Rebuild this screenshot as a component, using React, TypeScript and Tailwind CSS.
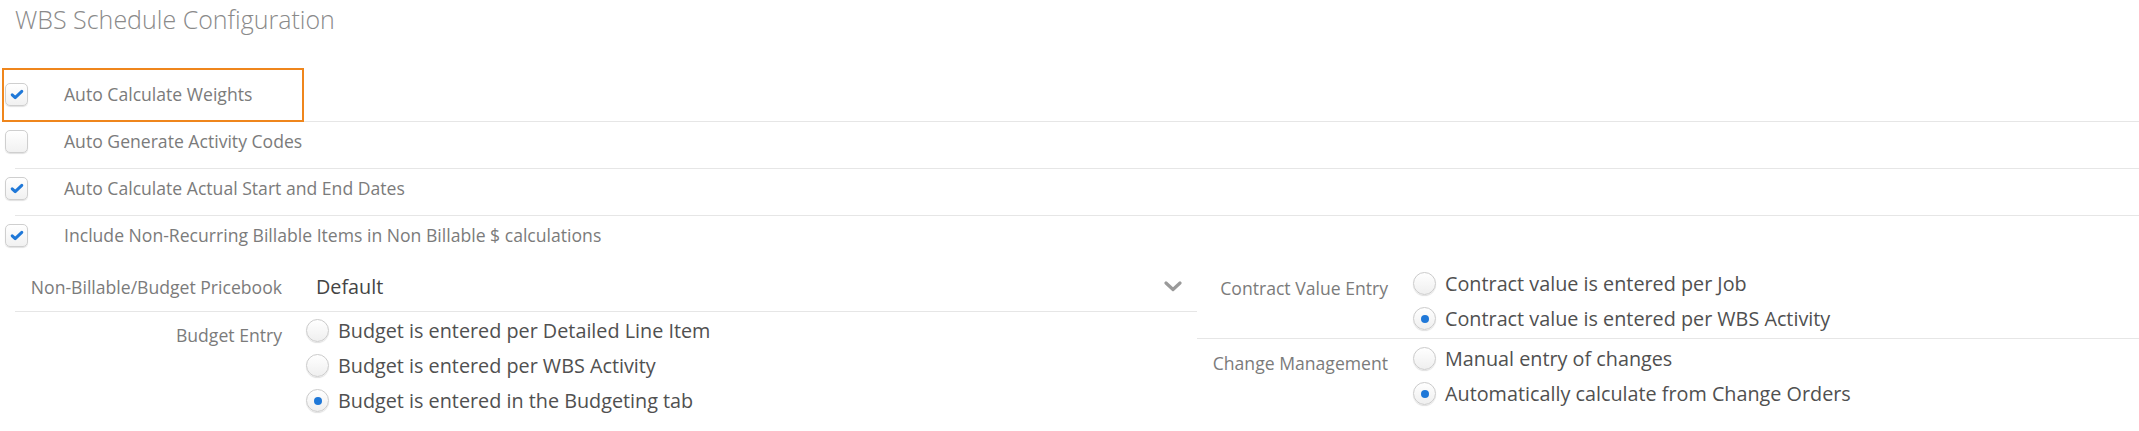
import React from "react";

interface CheckRowProps {
  label: string;
  checked: boolean;
  last?: boolean;
}

interface RadioGroupProps {
  options: { label: string; checked: boolean }[];
}

const Checkbox: React.FC<{ checked: boolean }> = ({ checked }) => (
  <span className="flex h-[23px] w-[23px] shrink-0 items-center justify-center rounded-[5px] border border-[#cfcfcf] bg-linear-to-b from-white to-[#f1f1f1] shadow-[0_1px_1px_rgba(0,0,0,0.12)]">
    {checked && (
      <svg width="14" height="11" viewBox="0 0 14 11" fill="none">
        <path
          d="M2.2 5.8 5.2 8.6 11.8 2.4"
          stroke="#1f78d8"
          strokeWidth="3"
          strokeLinecap="round"
          strokeLinejoin="round"
        />
      </svg>
    )}
  </span>
);

const Radio: React.FC<{ checked: boolean }> = ({ checked }) => (
  <span className="flex h-[23px] w-[23px] shrink-0 items-center justify-center rounded-full border border-[#cbcbcb] bg-linear-to-b from-white to-[#efefef] shadow-[0_1px_1px_rgba(0,0,0,0.12)]">
    {checked && <span className="h-[8px] w-[8px] rounded-full bg-[#1f78d8]" />}
  </span>
);

const CheckRow: React.FC<CheckRowProps> = ({ label, checked, last }) => (
  <div
    className={
      last
        ? "ml-[15px] h-[46px]"
        : "ml-[15px] h-[47px] border-b border-[#e6e6e6]"
    }
  >
    <div className="-ml-[10px] flex items-center gap-[36px] pt-[8px]">
      <Checkbox checked={checked} />
      <span className="text-[17.6px] leading-[23px] text-[#7b7b7b]">{label}</span>
    </div>
  </div>
);

const RadioGroup: React.FC<RadioGroupProps> = ({ options }) => (
  <div className="flex flex-col">
    {options.map((o) => (
      <label key={o.label} className="flex h-[35px] items-center gap-[9px]">
        <Radio checked={o.checked} />
        <span className="text-[19.8px] leading-[26px] text-[#505050]">{o.label}</span>
      </label>
    ))}
  </div>
);

export default function App() {
  return (
    <div className="relative min-h-[431px] w-full bg-white font-['Open_Sans',sans-serif]">
      <h1 className="h-[75px] pl-[15px] pt-[2px] text-[25px] font-light leading-[35px] text-[#8a8a8a]">
        WBS Schedule Configuration
      </h1>

      <div className="relative">
        <div className="pointer-events-none absolute -top-[7px] left-[2px] h-[54px] w-[302px] border-2 border-[#ef861c]" />
        <CheckRow label="Auto Calculate Weights" checked />
        <CheckRow label="Auto Generate Activity Codes" checked={false} />
        <CheckRow label="Auto Calculate Actual Start and End Dates" checked />
        <CheckRow
          label="Include Non-Recurring Billable Items in Non Billable $ calculations"
          checked
          last
        />
      </div>

      <div className="flex">
        <div className="ml-[15px] w-[1182px]">
          <div className="flex h-[50px] items-center border-b border-[#e6e6e6]">
            <span className="w-[267px] text-right text-[17.6px] leading-[24px] text-[#7b7b7b]">
              Non-Billable/Budget Pricebook
            </span>
            <div className="flex flex-1 items-center justify-between pl-[34px] pr-[15px]">
              <span className="text-[19.8px] leading-[26px] text-[#444]">Default</span>
              <svg width="18" height="11" viewBox="0 0 18 11" fill="none">
                <path
                  d="M2 2 9 8.5 16 2"
                  stroke="#9a9a9a"
                  strokeWidth="3.2"
                  strokeLinecap="round"
                  strokeLinejoin="round"
                />
              </svg>
            </div>
          </div>
          <div className="flex pt-[1px]">
            <span className="w-[267px] pt-[10px] text-right text-[17.6px] leading-[24px] text-[#7b7b7b]">
              Budget Entry
            </span>
            <div className="ml-[24px]">
              <RadioGroup
                options={[
                  { label: "Budget is entered per Detailed Line Item", checked: false },
                  { label: "Budget is entered per WBS Activity", checked: false },
                  { label: "Budget is entered in the Budgeting tab", checked: true },
                ]}
              />
            </div>
          </div>
        </div>

        <div className="flex-1">
          <div className="flex border-b border-[#e6e6e6] pb-[2px] pt-[4px]">
            <span className="w-[191px] pt-[10px] text-right text-[17.6px] leading-[24px] text-[#7b7b7b]">
              Contract Value Entry
            </span>
            <div className="ml-[25px]">
              <RadioGroup
                options={[
                  { label: "Contract value is entered per Job", checked: false },
                  { label: "Contract value is entered per WBS Activity", checked: true },
                ]}
              />
            </div>
          </div>
          <div className="flex pt-[2px]">
            <span className="w-[191px] pt-[10px] text-right text-[17.6px] leading-[24px] text-[#7b7b7b]">
              Change Management
            </span>
            <div className="ml-[25px]">
              <RadioGroup
                options={[
                  { label: "Manual entry of changes", checked: false },
                  { label: "Automatically calculate from Change Orders", checked: true },
                ]}
              />
            </div>
          </div>
        </div>
      </div>
    </div>
  );
}
